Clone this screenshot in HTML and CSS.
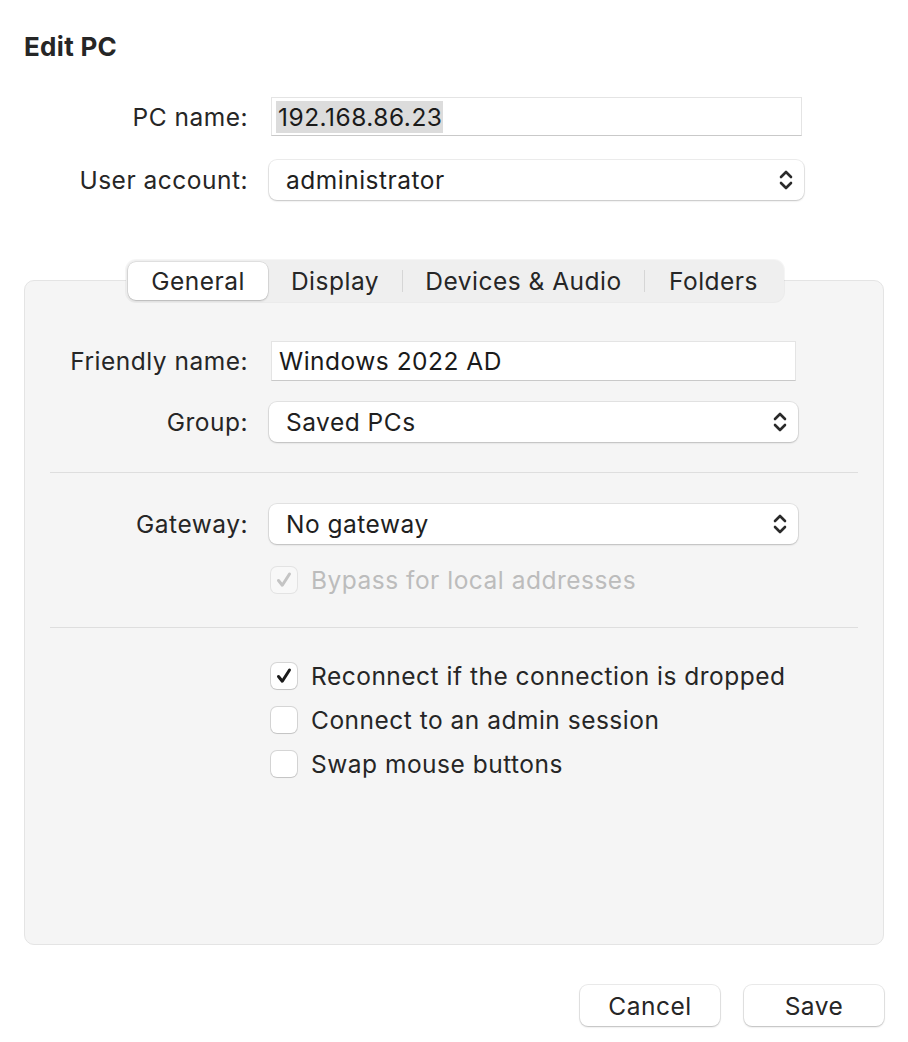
FILE: index.html
```html
<!DOCTYPE html>
<html>
<head>
<meta charset="utf-8">
<link rel="stylesheet" href="styles.css">
</head>
<body>
<div class="dialog">
  <h1 class="title">Edit PC</h1>

  <div class="form top-form">
    <label class="lbl">PC name:</label>
    <div class="field"><span class="sel">192.168.86.23</span></div>

    <label class="lbl">User account:</label>
    <div class="popup"><span>administrator</span>
      <svg class="chev" width="14" height="22" viewBox="0 0 14 22"><path d="M2 8 L7 3 L12 8 M2 14 L7 19 L12 14" fill="none" stroke="#2a2a2a" stroke-width="2.6" stroke-linecap="round" stroke-linejoin="round"/></svg>
    </div>
  </div>

  <div class="tabpanel">
    <div class="segmented">
      <div class="seg seg-general active">General</div>
      <div class="seg seg-display">Display</div>
      <div class="sep-v"></div>
      <div class="seg seg-devices">Devices &amp; Audio</div>
      <div class="sep-v"></div>
      <div class="seg seg-folders">Folders</div>
    </div>

    <div class="form panel-form first">
      <label class="lbl">Friendly name:</label>
      <div class="field small-field"><span>Windows 2022 AD</span></div>

      <label class="lbl">Group:</label>
      <div class="popup small-popup"><span>Saved PCs</span>
        <svg class="chev" width="14" height="22" viewBox="0 0 14 22"><path d="M2 8 L7 3 L12 8 M2 14 L7 19 L12 14" fill="none" stroke="#2a2a2a" stroke-width="2.6" stroke-linecap="round" stroke-linejoin="round"/></svg>
      </div>
    </div>

    <div class="hr hr1"></div>

    <div class="form panel-form second">
      <label class="lbl">Gateway:</label>
      <div class="popup small-popup"><span>No gateway</span>
        <svg class="chev" width="14" height="22" viewBox="0 0 14 22"><path d="M2 8 L7 3 L12 8 M2 14 L7 19 L12 14" fill="none" stroke="#2a2a2a" stroke-width="2.6" stroke-linecap="round" stroke-linejoin="round"/></svg>
      </div>

      <div></div>
      <div class="check disabled bypass">
        <span class="box checked"><svg width="18" height="18" viewBox="0 0 18 18"><path d="M3.5 9.5 L7.3 14.2 L14.5 3" fill="none" stroke="#c4c4c4" stroke-width="3" stroke-linecap="round" stroke-linejoin="round"/></svg></span>
        <span class="ctext">Bypass for local addresses</span>
      </div>
    </div>

    <div class="hr hr2"></div>

    <div class="checks">
      <div class="check">
        <span class="box checked"><svg width="18" height="18" viewBox="0 0 18 18"><path d="M3.5 9.5 L7.3 14.2 L14.5 3" fill="none" stroke="#1a1a1a" stroke-width="3" stroke-linecap="round" stroke-linejoin="round"/></svg></span>
        <span class="ctext">Reconnect if the connection is dropped</span>
      </div>
      <div class="check">
        <span class="box"></span>
        <span class="ctext">Connect to an admin session</span>
      </div>
      <div class="check">
        <span class="box"></span>
        <span class="ctext">Swap mouse buttons</span>
      </div>
    </div>
  </div>

  <div class="buttons">
    <button class="btn">Cancel</button>
    <button class="btn">Save</button>
  </div>
</div>
</body>
</html>
```

FILE: styles.css
```css
* { box-sizing: border-box; }
html, body {
  margin: 0;
  padding: 0;
  background: #ffffff;
}
body {
  font-family: "Inter", "Noto Sans", "Liberation Sans", sans-serif;
  color: #262626;
  font-size: 24.5px;
  letter-spacing: 0.5px;
  width: 908px;
  height: 1042px;
  overflow: hidden;
}
.dialog {
  padding: 0 24px 0 24px;
}
.title {
  margin: 0;
  padding-top: 31px;
  font-size: 26px;
  font-weight: 700;
  line-height: 32px;
  color: #262626;
  letter-spacing: 0.3px;
}
.form {
  display: grid;
  grid-template-columns: 224px 1fr;
  column-gap: 21px;
  align-items: center;
}
.top-form {
  margin-top: 34px;
  margin-right: 80px;
  row-gap: 24px;
}
.lbl {
  text-align: right;
  white-space: nowrap;
  line-height: 30px;
}
.field {
  height: 39px;
  margin: 0 2px 0 2px;
  background: #fff;
  border: 1px solid #e4e4e4;
  border-bottom-color: #c9c9c9;
  display: flex;
  align-items: center;
  padding-left: 4px;
  line-height: 30px;
  color: #1a1a1a;
}
.sel {
  background: #dcdcdc;
  padding: 1px 1px 1px 2px;
  line-height: 30px;
}
.popup {
  height: 40px;
  background: #fff;
  border-radius: 8px;
  box-shadow: 0 0 0 1px rgba(0,0,0,0.07), 0 1px 2px rgba(0,0,0,0.18);
  display: flex;
  align-items: center;
  justify-content: space-between;
  padding: 0 11px 0 17px;
  line-height: 30px;
  color: #1f1f1f;
}
.chev { display: block; }

.tabpanel {
  margin-top: 80px;
  background: #f5f5f5;
  border: 1px solid #e4e4e4;
  border-radius: 10px;
  height: 665px;
  display: flex;
  flex-direction: column;
}
.segmented {
  align-self: center;
  margin-top: -21px;
  margin-left: 2px;
  height: 42px;
  display: flex;
  align-items: center;
  background: #efefef;
  border-radius: 10px;
  box-shadow: 0 0 0 1px rgba(0,0,0,0.04);
  padding: 2px;
}
.seg {
  height: 38px;
  display: flex;
  align-items: center;
  justify-content: center;
  color: #262626;
  line-height: 30px;
  white-space: nowrap;
}
.seg.active {
  background: #fff;
  border-radius: 8px;
  box-shadow: 0 0 0 0.5px rgba(0,0,0,0.12), 0 1px 2px rgba(0,0,0,0.2);
}
.seg-general { width: 140px; }
.seg-display { width: 134px; }
.seg-devices { width: 241px; }
.seg-folders { width: 137px; }
.sep-v {
  width: 1px;
  height: 22px;
  background: #d6d6d6;
}

.panel-form {
  margin-right: 85px;
  grid-template-columns: 223px 1fr;
}
.panel-form.first {
  margin-top: 39px;
  row-gap: 21px;
}
.small-field {
  height: 40px;
  margin-right: 2px;
  padding-left: 7px;
}
.hr {
  height: 1px;
  background: #dedede;
  margin: 0 25px;
}
.hr1 { margin-top: 30px; }
.panel-form.second {
  margin-top: 31px;
  row-gap: 21px;
}
.hr2 { margin-top: 32px; }

.check {
  display: flex;
  align-items: center;
  gap: 14px;
  height: 30px;
}
.bypass { margin-left: 2px; }
.box {
  width: 26px;
  height: 26px;
  border-radius: 6px;
  background: #fff;
  box-shadow: 0 0 0 1px rgba(0,0,0,0.13), 0 1px 1px rgba(0,0,0,0.08);
  display: flex;
  align-items: center;
  justify-content: center;
  flex: none;
}
.check.disabled .box {
  background: #f8f8f8;
  box-shadow: 0 0 0 1px rgba(0,0,0,0.07);
}
.check.disabled .ctext { color: #bcbcbc; }
.ctext {
  line-height: 30px;
  white-space: nowrap;
  color: #262626;
}
.checks {
  margin-top: 33px;
  margin-left: 246px;
  display: flex;
  flex-direction: column;
  gap: 14px;
}

.buttons {
  margin-top: 40px;
  display: flex;
  justify-content: flex-end;
  gap: 24px;
}
.btn {
  width: 140px;
  height: 41px;
  border: none;
  background: #fff;
  border-radius: 8px;
  box-shadow: 0 0 0 1px rgba(0,0,0,0.08), 0 1px 2px rgba(0,0,0,0.2);
  font-family: inherit;
  font-size: 24.5px;
  letter-spacing: 0.5px;
  color: #262626;
  padding: 0;
  line-height: 30px;
}
```
